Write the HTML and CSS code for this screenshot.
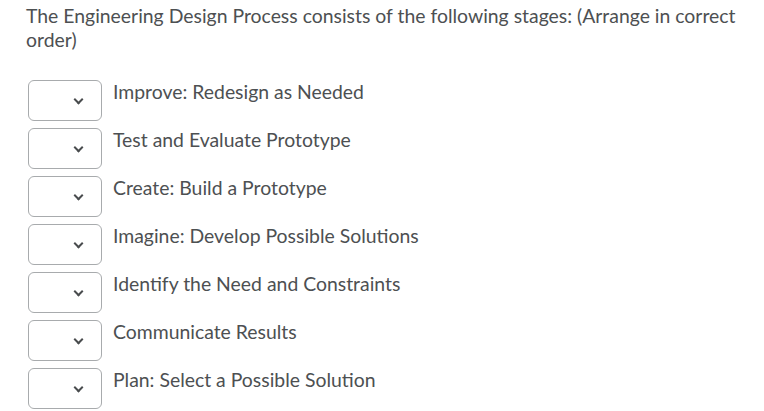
FILE: index.html
```html
<!DOCTYPE html>
<html lang="en">
<head>
    <meta charset="UTF-8">
    <meta name="viewport" content="width=device-width, initial-scale=1.0">
    <title>Ordering Question</title>
    <link rel="stylesheet" href="styles.css">
</head>
<body>

<div class="question">
    <p class="prompt">The Engineering Design Process consists of the following stages: (Arrange in correct order)</p>

    <!-- Each stage gets an order dropdown -->
    <div class="stages">
        <div class="stage">
            <div class="order-select"><span class="chevron"></span></div>
            <span class="label">Improve: Redesign as Needed</span>
        </div>
        <div class="stage">
            <div class="order-select"><span class="chevron"></span></div>
            <span class="label">Test and Evaluate Prototype</span>
        </div>
        <div class="stage">
            <div class="order-select"><span class="chevron"></span></div>
            <span class="label">Create: Build a Prototype</span>
        </div>
        <div class="stage">
            <div class="order-select"><span class="chevron"></span></div>
            <span class="label">Imagine: Develop Possible Solutions</span>
        </div>
        <div class="stage">
            <div class="order-select"><span class="chevron"></span></div>
            <span class="label">Identify the Need and Constraints</span>
        </div>
        <div class="stage">
            <div class="order-select"><span class="chevron"></span></div>
            <span class="label">Communicate Results</span>
        </div>
        <div class="stage">
            <div class="order-select"><span class="chevron"></span></div>
            <span class="label">Plan: Select a Possible Solution</span>
        </div>
    </div>
</div>

</body>
</html>
```

FILE: styles.css
```css
body {
    font-family: Lato, "Open Sans", sans-serif;
    margin: 0;
    background-color: #fff;
    color: #4d5052;
}

.question {
    padding: 4px 20px 0 26px;
}

.prompt {
    margin: 0;
    font-size: 19.4px;
    line-height: 24px;
}

/* Stage list */
.stages {
    margin-top: 28px;
    display: flex;
    flex-direction: column;
    gap: 7px;
}
.stage {
    display: flex;
    align-items: flex-start;
    gap: 11px;
}
.order-select {
    height: 39px;
    width: 53px;
    margin-left: 2px;
    padding-right: 19px;
    border: 1px solid #a8abad;
    border-radius: 6px;
    display: flex;
    align-items: center;
    justify-content: flex-end;
}
.chevron {
    width: 5px;
    height: 5px;
    border-right: 2px solid #494c4e;
    border-bottom: 2px solid #494c4e;
    transform: rotate(45deg);
    margin-top: -3px;
}
.label {
    font-size: 19.4px;
    line-height: 24px;
}
```
